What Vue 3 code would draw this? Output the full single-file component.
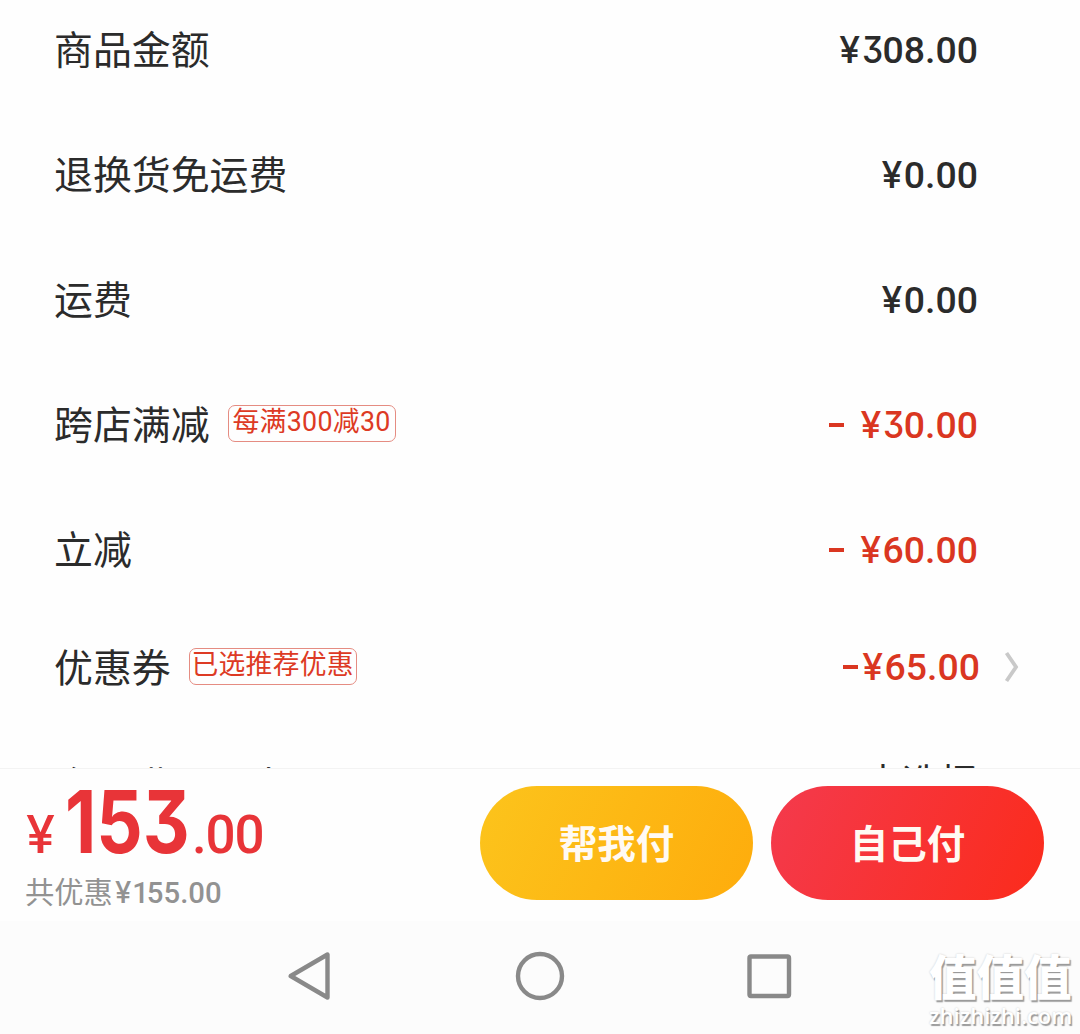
<script setup>
const rows = [
  { label: '商品金额', amount: '308.00' },
  { label: '退换货免运费', amount: '0.00' },
  { label: '运费', amount: '0.00' },
  { label: '跨店满减', tag: '每满300减30', minus: 'spaced', amount: '30.00' },
  { label: '立减', minus: 'spaced', amount: '60.00' },
  { label: '优惠券', tag: '已选推荐优惠', minus: 'tight', amount: '65.00', arrow: true },
]
</script>

<template>
  <div class="screen">
    <main class="list">
      <div v-for="row in rows" :key="row.label" class="row" :class="{ coupon: row.arrow }">
        <span class="label">{{ row.label }}</span>
        <span v-if="row.tag" class="tag">{{ row.tag }}</span>
        <span class="amount" :class="{ off: row.minus }">
          <i v-if="row.minus" class="minus" :class="row.minus"></i><span class="yen">¥</span><span v-for="(c, i) in row.amount" :key="i" :class="{ three: c === '3' }">{{ c }}</span>
        </span>
        <svg v-if="row.arrow" class="arrow" viewBox="0 0 16 32" fill="none" stroke="#c9c9c9" stroke-width="3.8">
          <path d="M2.5 2 L12 16 L2.5 30" />
        </svg>
      </div>
      <div class="row cut">
        <span class="label">全品满品品券</span>
        <span class="choose">未选择</span>
      </div>
    </main>
    <footer class="pay">
      <div class="sum">
        <div class="total"><span class="cur">¥</span><span class="int">153</span><span class="dec">.00</span></div>
        <div class="saved">共优惠<span class="num"><span class="small-yen">¥</span><span class="one">1</span>55.00</span></div>
      </div>
      <button class="btn help">帮我付</button>
      <button class="btn self">自己付</button>
    </footer>
    <nav class="nav">
      <svg class="system" viewBox="0 0 504 52" fill="none" stroke="#898989" stroke-width="4.4" stroke-linejoin="round">
        <path d="M39.5 4.5 V47.5 L2.7 26 Z" />
        <circle cx="252" cy="26" r="22" />
        <rect x="461.5" y="6.5" width="39.5" height="39.5" rx="1.5" />
      </svg>
      <div class="mark">
        <div class="mark-cn">值值值</div>
        <div class="mark-en">zhizhizhi.com</div>
      </div>
    </nav>
  </div>
</template>

<style>
body { margin: 0; }
</style>

<style scoped>
.screen {
  width: 1080px;
  height: 1034px;
  overflow: hidden;
  display: flex;
  flex-direction: column;
  background: #fefefe;
  color: #2b2b2b;
  font-family: Roboto, "Noto Sans CJK SC", sans-serif;
}
.list { height: 768px; overflow: hidden; border-bottom: 1px solid #f3f3f3; }
.row {
  display: flex;
  align-items: center;
  height: 125px;
  padding: 0 102px 0 54px;
  white-space: nowrap;
}
.row:first-child { margin-top: -13px; }
.label { font-size: 38.9px; line-height: 58px; margin-top: -6px; font-family: "Noto Sans CJK SC", sans-serif; }
.tag {
  box-sizing: border-box;
  width: 168px;
  height: 37px;
  margin: -2px 0 0 18px;
  border: 1px solid #e58c82;
  border-radius: 7px;
  color: #dd3a24;
  font-size: 26.8px;
  letter-spacing: .3px;
  line-height: 33px;
  text-align: center;
}
.amount { display: flex; align-items: center; margin-left: auto; font-size: 37.4px; font-weight: 500; line-height: 44px; }
.yen { width: 24px; font-family: Inter, sans-serif; text-align: center; }
.three { font-family: Inter, sans-serif; font-feature-settings: "cv09" 1; }
.amount .three { display: inline-block; width: 21px; transform: scaleX(.9); transform-origin: left; }
.off { color: #da3621; }
.minus { width: 15px; height: 4px; background: currentColor; }
.spaced { margin-right: 15px; }
.tight { margin-right: 3px; }
.coupon { height: 109px; padding-right: 60px; }
.coupon .tag { margin-top: 0; }
.coupon .label { margin-top: -3px; }
.arrow { width: 16px; height: 32px; margin-left: 24px; }
.cut { height: 120px; align-items: flex-start; padding-top: 30px; box-sizing: border-box; }
.cut .label { margin-top: 3px; }
.choose { margin-left: auto; font: 38px/58px "Noto Sans CJK SC", sans-serif; }
.pay {
  box-sizing: border-box;
  height: 152px;
  display: flex;
  align-items: flex-start;
  padding: 17px 36px 0 25px;
}
.sum { flex: 1; color: #e83438; }
.total { display: flex; align-items: baseline; height: 88px; line-height: 72px; font-weight: 500; }
.cur { box-sizing: border-box; width: 40px; padding-left: 1px; font-family: Inter, sans-serif; font-size: 52px; }
.int {
  width: 127px;
  font-family: Inter, sans-serif;
  font-feature-settings: "cv09" 1;
  font-size: 86px;
  font-weight: 700;
  transform: scaleX(.845);
  transform-origin: left;
}
.dec { font-size: 53px; letter-spacing: -1.2px; }
.saved { color: #929292; font-size: 29.3px; line-height: 38px; white-space: nowrap; }
.num { font-weight: 500; }
.small-yen { margin: 0 1px 0 2px; font-family: Inter, sans-serif; }
.one { margin-right: -2px; }
.btn {
  width: 273px;
  height: 114px;
  padding: 0 0 4px;
  border: 0;
  border-radius: 57px;
  color: #fffaf3;
  font: 700 38.5px/58px "Noto Sans CJK SC", sans-serif;
}
.help { background: linear-gradient(115deg, #fcc41c, #feac0c); }
.self { margin-left: 18px; background: linear-gradient(115deg, #f43a4d, #fb2b1b); }
.nav { flex: 1; display: flex; background: #fcfcfc; }
.system { width: 504px; height: 52px; margin: 29px 0 0 288px; }
.mark { margin: 26px 0 0 137px; color: #fff; text-shadow: 1.5px 1.5px 1px #9a9a9a, 0 0 2px #c9c9c9; white-space: nowrap; }
.mark-cn { font: 900 47.5px/56px "Noto Sans CJK SC", sans-serif; }
.mark-en { font: 600 22px/24px "Open Sans", sans-serif; }
</style>
